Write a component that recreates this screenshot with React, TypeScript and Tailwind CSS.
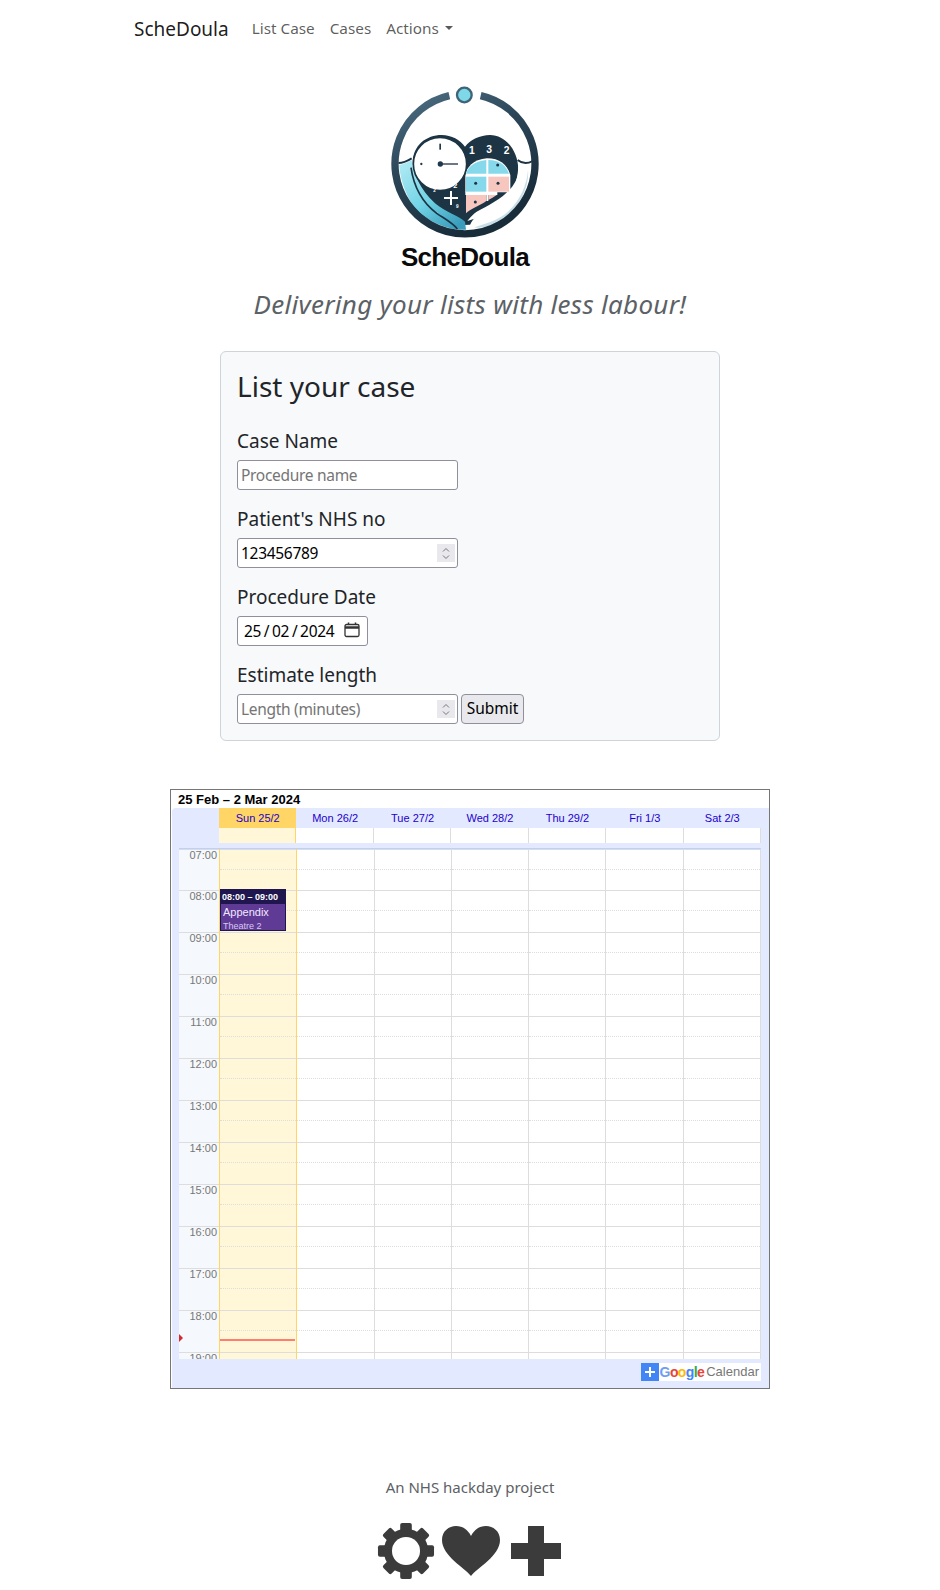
import React from 'react';

const Logo = () => (
  <svg viewBox="0 0 570 615" width="190" height="205" className="block">
    <defs>
      <linearGradient id="ring" x1="0" y1="0" x2="0.5" y2="1">
        <stop offset="0" stopColor="#4f7186" />
        <stop offset="0.45" stopColor="#2c4658" />
        <stop offset="1" stopColor="#182c3a" />
      </linearGradient>
      <linearGradient id="hand" x1="0" y1="0" x2="0.8" y2="1">
        <stop offset="0" stopColor="#b5ecf5" />
        <stop offset="0.55" stopColor="#72d4e6" />
        <stop offset="1" stopColor="#3a9dbb" />
      </linearGradient>
    </defs>
    {/* dark bottom of the disc and heart */}
    <path d="M120 390 C170 470 390 470 440 390 L285 440 Z" fill="#1c3444" />
    <path d="M285 450 C235 425 135 360 128 265 C128 210 170 180 215 180 C245 180 270 195 285 215 C300 195 330 180 360 180 C405 180 445 225 445 285 C445 345 370 385 320 410 C300 425 290 440 285 450 Z" fill="#1c3444" />
    {/* left hand */}
    <path d="M87 270 C100 268 112 262 125 255 C128 290 150 345 195 385 C225 410 270 425 285 440 L288 464 C240 467 180 445 140 405 C110 370 92 320 87 270 Z" fill="url(#hand)" />
    <path d="M123 278 C132 340 160 385 200 415 C225 432 250 445 262 462" fill="none" stroke="#1c3444" strokeWidth="5" />
    <path d="M85 264 C100 264 112 258 125 250" fill="none" stroke="#1c3444" strokeWidth="6" />
    {/* right hand */}
    <path d="M445 262 C455 270 470 272 487 262 C492 330 450 420 372 455 C345 468 320 470 296 466 C300 445 310 425 340 412 C375 400 412 375 430 340 C442 315 445 290 445 262 Z" fill="#fff" />
    <path d="M474 285 C470 340 440 400 385 430 C360 445 335 448 312 458 C345 462 385 445 420 415 C455 380 478 330 474 285 Z" fill="#c9dfe8" />
    <path d="M443 255 C455 265 470 268 488 258" fill="none" stroke="#1c3444" strokeWidth="6" />
    {/* calculator cells */}
    <path d="M286 300 C288 280 310 252 351 250 C390 250 412 270 421 300 V352 H286 Z" fill="#fff" />
    <rect x="286" y="350" width="96" height="10" fill="#fff" />
    <rect x="349" y="360" width="6" height="18" fill="#fff" />
    <path d="M288 296 C292 278 312 258 349 255 L349 296 Z" fill="#86d9ea" />
    <path d="M355 255 C390 255 408 272 417 296 L355 296 Z" fill="#86d9ea" />
    <rect x="288" y="305" width="61" height="45" fill="#86d9ea" />
    <rect x="355" y="305" width="62" height="45" fill="#f6c6bf" />
    <path d="M288 360 H349 V378 C330 392 300 402 288 415 Z" fill="#f6c6bf" />
    <path d="M355 360 H380 C372 366 363 371 355 375 Z" fill="#f6c6bf" />
    {[[317, 325], [384, 325], [316, 381], [383, 270]].map(([cx, cy]) => (
      <circle key={cx + cy} cx={cx} cy={cy} r="4.5" fill="#1c3444" />
    ))}
    {/* clock */}
    <circle cx="210" cy="267" r="80" fill="#fff" stroke="#1c3444" strokeWidth="5" />
    <rect x="208" y="206" width="5" height="18" fill="#22384a" />
    <circle cx="154" cy="267" r="3.5" fill="#22384a" />
    <rect x="210" y="265" width="54" height="4" fill="#22384a" />
    <circle cx="211" cy="267" r="8" fill="#22384a" />
    {/* sums */}
    <rect x="222" y="366" width="42" height="6" fill="#fff" />
    <rect x="240" y="348" width="6" height="42" fill="#fff" />
    <g fill="#fff" fontFamily="'Liberation Sans', sans-serif" fontWeight="700">
      <text x="297" y="238" fontSize="31">1</text>
      <text x="349" y="233" fontSize="31">3</text>
      <text x="401" y="238" fontSize="31">2</text>
      <text x="250" y="338" fontSize="22">2</text>
      <text x="190" y="352" fontSize="14">2</text>
      <text x="258" y="399" fontSize="14">9</text>
    </g>
    {/* ring and top dot */}
    <path d="M238 62 A 210 210 0 1 0 332 62" fill="none" stroke="url(#ring)" strokeWidth="22" />
    <circle cx="283" cy="60" r="22" fill="#7fd8e8" stroke="#3f6478" strokeWidth="7" />
  </svg>
);

const GearIcon = () => (
  <svg viewBox="0 0 60 60" width="58" height="58">
    {[0, 45, 90, 135].map((a) => (
      <rect key={a} x="24" y="1" width="12" height="58" rx="2" fill="#3b3b3b" transform={`rotate(${a} 30 30)`} />
    ))}
    <circle cx="30" cy="30" r="23" fill="#3b3b3b" />
    <circle cx="30" cy="30" r="14.5" fill="#fff" />
  </svg>
);

const HeartIcon = () => (
  <svg viewBox="0 0 60 52" width="60" height="52">
    <path d="M30 51 C24 43 1 31 1 15 C1 6 8 1 15 1 C22 1 27 5 30 11 C33 5 38 1 45 1 C52 1 59 6 59 15 C59 31 36 43 30 51 Z" fill="#3b3b3b" />
  </svg>
);

const PlusIcon = () => (
  <svg viewBox="0 0 50 50" width="50" height="50">
    <path d="M17 0 H33 V17 H50 V33 H33 V50 H17 V33 H0 V17 H17 Z" fill="#3b3b3b" />
  </svg>
);

const Spinner = () => (
  <span className="absolute right-[3px] top-[6px] flex h-[18px] w-[18px] flex-col items-center justify-center bg-[#e9e9ed]">
    <svg viewBox="0 0 10 14" width="10" height="15" fill="none" stroke="#777" strokeWidth="1">
      <path d="M2 5 L5 2 L8 5" />
      <path d="M2 9 L5 12 L8 9" />
    </svg>
  </span>
);

const inputClass =
  "block h-[30px] w-[221px] rounded-[3px] border border-[#8f8f9d] bg-white px-[3px] text-[15.5px] tracking-[-0.3px] text-black placeholder:text-[#757575]";

const Field = ({ label, children }: { label: string; children: React.ReactNode }) => (
  <div className="mb-[14px] last:mb-0">
    <div className="mb-[4px] h-[30px] text-[19px] leading-[30px] text-[#212529]">{label}</div>
    {children}
  </div>
);

const days = ['Sun 25/2', 'Mon 26/2', 'Tue 27/2', 'Wed 28/2', 'Thu 29/2', 'Fri 1/3', 'Sat 2/3'];
const hours = ['07:00', '08:00', '09:00', '10:00', '11:00', '12:00', '13:00', '14:00', '15:00', '16:00', '17:00', '18:00', '19:00'];

const Calendar = () => (
  <div className="mx-auto flex h-[600px] w-[600px] flex-col border border-[#767676] bg-white font-['Liberation_Sans',sans-serif]">
    <div className="h-[18px] pl-[7px] text-[13px] font-bold leading-[20px] text-black">25 Feb – 2 Mar 2024</div>
    <div className="ml-px flex min-h-0 flex-1 flex-col rounded-tl-[4px] bg-[#e3e9ff] pl-[7px] pr-[8px]">
      <div className="flex pl-[40px]">
        {days.map((d, i) => (
          <div
            key={d}
            className={`h-[20px] flex-1 text-center text-[11px] leading-[20px] text-[#2200cc] ${i === 0 ? 'bg-[#ffd666]' : ''}`}
          >
            {d}
          </div>
        ))}
      </div>
      <div className="flex h-[15px] pl-[40px]">
        {days.map((d, i) => (
          <div
            key={d}
            className={`flex-1 border-r border-[#dddddd] ${i === 0 ? 'border-r-[#ffd666] bg-[#fff7d7]' : 'bg-white'}`}
          />
        ))}
      </div>
      <div className="h-[6px] border-b border-[#bcd0ff]" />
      <div className="relative flex h-[510px] overflow-hidden">
        <div className="w-[40px] shrink-0 bg-[#f5f9fd]">
          {hours.map((h) => (
            <div key={h} className="h-[42px] border-t border-[#dddddd] pr-[2px] text-right text-[11px] leading-[11px] text-[#777777] first:h-[41px]">
              {h}
            </div>
          ))}
        </div>
        {days.map((d, i) => (
          <div
            key={d}
            className={`flex-1 ${i === 0 ? 'border-x border-[#ffd666] bg-[#fff7d7]' : 'border-r border-[#dddddd] bg-white last:border-r-0'}`}
          >
            {hours.map((h) => (
              <div key={h} className="h-[42px] border-t border-[#dddddd] first:h-[41px]">
                <div className="h-[20px] border-b border-dotted border-[#dddddd]" />
              </div>
            ))}
          </div>
        ))}
        {/* event */}
        <div className="absolute left-[41px] top-[40px] h-[42px] w-[66px] overflow-hidden border border-[#1f1650] bg-[#5f3b96] text-white">
          <div className="h-[14px] bg-[#1f1650] pl-px text-[9px] font-bold leading-[14px]">08:00 – 09:00</div>
          <div className="pl-[2px] text-[11px] leading-[16px] text-[#f0e8ff]">Appendix</div>
          <div className="pl-[2px] text-[9px] leading-[12px] text-[#d8c8f2]">Theatre 2</div>
        </div>
        {/* now marker */}
        <div className="absolute left-[41px] top-[490px] h-[2px] w-[75px] bg-[#ff7f6e]" />
        <div className="absolute left-0 top-[485px] h-0 w-0 border-y-[4px] border-l-[4px] border-y-transparent border-l-[#d42a2a]" />
      </div>
      <div className="flex flex-1 items-start justify-end pt-[4px]">
        <div className="flex h-[18px] items-center bg-white">
          <span className="flex h-[18px] w-[18px] items-center justify-center bg-[#4285f4] text-white">
            <svg viewBox="0 0 12 12" width="12" height="12">
              <path d="M5 1 H7 V5 H11 V7 H7 V11 H5 V7 H1 V5 H5 Z" fill="#fff" />
            </svg>
          </span>
          <span className="ml-px text-[14px] font-bold leading-[18px] tracking-[-0.6px]">
            <span className="text-[#6f9df5]">G</span>
            <span className="text-[#ea4335]">o</span>
            <span className="text-[#fbbc05]">o</span>
            <span className="text-[#4285f4]">g</span>
            <span className="text-[#34a853]">l</span>
            <span className="text-[#ea4335]">e</span>
          </span>
          <span className="ml-[2px] pr-[2px] text-[13px] leading-[18px] text-[#777777]">Calendar</span>
        </div>
      </div>
    </div>
  </div>
);

export default function App() {
  return (
    <div className="h-[1590px] overflow-hidden bg-white font-['Noto_Sans',sans-serif]">
      <nav className="flex h-[58px] items-center pl-[134px]">
        <span className="text-[19px] text-black/90">ScheDoula</span>
        <div className="-mt-[2px] ml-[23px] flex items-center gap-[15px] text-[15.3px] text-black/65">
          <span>List Case</span>
          <span>Cases</span>
          <span className="flex items-center">
            Actions
            <span className="ml-[6px] h-0 w-0 border-x-[4.5px] border-t-[4.5px] border-x-transparent border-t-black/65" />
          </span>
        </div>
      </nav>

      <div className="mt-[17px] ml-[370px]">
        <Logo />
      </div>
      <div className="-mt-[40px] ml-[370px] w-[190px] text-center font-['Liberation_Sans',sans-serif] text-[26px] font-bold leading-[34px] tracking-[-0.7px] text-[#0a0a0a]">
        ScheDoula
      </div>

      <p className="mt-[12px] text-center text-[26px] italic leading-[36px] tracking-[0.3px] text-[#5c6166]">
        Delivering your lists with less labour!
      </p>

      <div className="mx-auto mt-[29px] h-[390px] w-[500px] rounded-[6px] border border-[#ced4da] bg-[#f8f9fa] p-[16px] pt-[17px]">
        <h3 className="mb-[23px] text-[28px] leading-[34px] text-[#212529]">List your case</h3>
        <Field label="Case Name">
          <input className={inputClass} placeholder="Procedure name" />
        </Field>
        <Field label="Patient's NHS no">
          <div className="relative w-[221px]">
            <input className={inputClass} defaultValue="123456789" />
            <Spinner />
          </div>
        </Field>
        <Field label="Procedure Date">
          <div className="relative w-[131px]">
            <input className={`${inputClass} !w-[131px] pl-[6px] [word-spacing:-1px]`} defaultValue="25 / 02 / 2024" />
            <svg viewBox="0 0 16 16" width="16" height="16" className="absolute right-[8px] top-[6px]" fill="none" stroke="#333" strokeWidth="1.3">
              <rect x="1" y="2.5" width="14" height="12" rx="1.5" />
              <path d="M1 5.5 H15" strokeWidth="2.5" />
              <path d="M4.5 0.5 V3 M11.5 0.5 V3" strokeWidth="1.5" />
            </svg>
          </div>
        </Field>
        <Field label="Estimate length">
          <div className="flex items-center gap-[3px]">
            <div className="relative w-[221px]">
              <input className={inputClass} placeholder="Length (minutes)" />
              <Spinner />
            </div>
            <button className="h-[30px] w-[63px] rounded-[4px] border border-[#8f8f9d] bg-[#e9e9ed] text-[15.5px] text-black">
              Submit
            </button>
          </div>
        </Field>
      </div>

      <div className="mt-[48px]">
        <Calendar />
      </div>

      <p className="mt-[86px] text-center text-[15px] leading-[24px] text-[#5c6166]">An NHS hackday project</p>
      <div className="mt-[23px] flex items-center justify-center pr-[2px]">
        <GearIcon />
        <span className="ml-[6px]">
          <HeartIcon />
        </span>
        <span className="ml-[10px]">
          <PlusIcon />
        </span>
      </div>
    </div>
  );
}
